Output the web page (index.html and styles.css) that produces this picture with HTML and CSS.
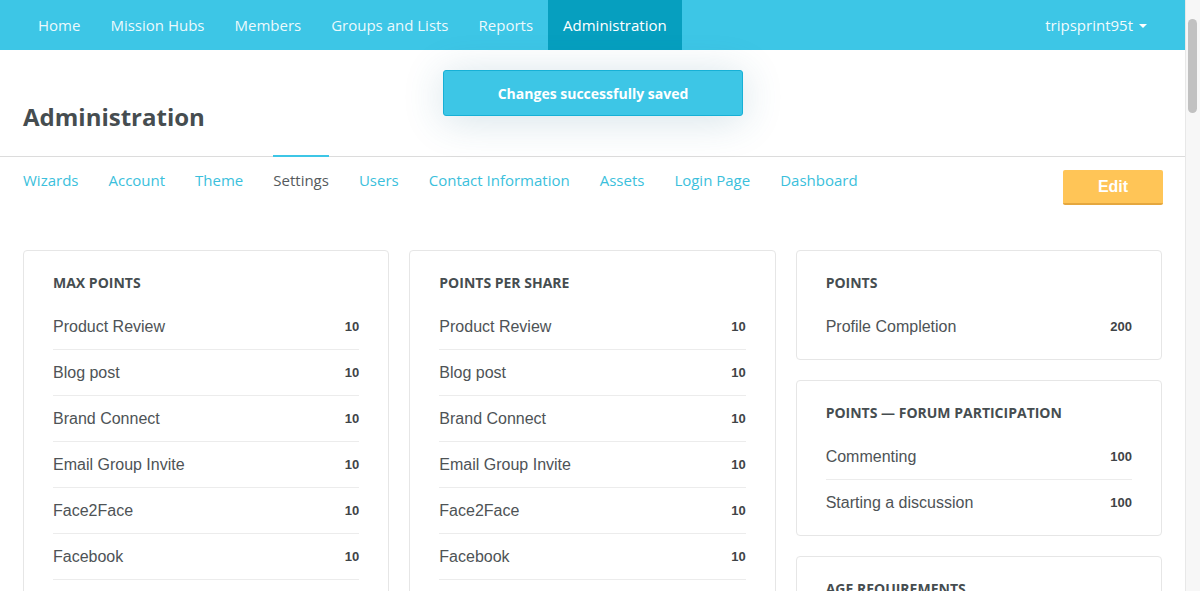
FILE: index.html
```html
<!DOCTYPE html>
<html>
<head>
<meta charset="utf-8">
<link rel="stylesheet" href="styles.css">
</head>
<body>
<div class="page">
<nav class="topbar">
  <ul class="nav-list">
    <li class="nav-item">Home</li>
    <li class="nav-item">Mission Hubs</li>
    <li class="nav-item">Members</li>
    <li class="nav-item">Groups and Lists</li>
    <li class="nav-item">Reports</li>
    <li class="nav-item active">Administration</li>
  </ul>
  <div class="user-menu">tripsprint95t <span class="caret"></span></div>
</nav>

<div class="toast">Changes successfully saved</div>

<header class="page-header">
  <h1 class="page-title">Administration</h1>
</header>

<div class="tabs-bar">
  <ul class="tabs">
    <li class="tab">Wizards</li>
    <li class="tab">Account</li>
    <li class="tab">Theme</li>
    <li class="tab active">Settings</li>
    <li class="tab">Users</li>
    <li class="tab">Contact Information</li>
    <li class="tab">Assets</li>
    <li class="tab">Login Page</li>
    <li class="tab">Dashboard</li>
  </ul>
  <button class="edit-btn">Edit</button>
</div>

<main class="grid">
  <div class="col">
    <section class="card">
      <h2 class="card-title">Max Points</h2>
      <ul class="rows">
        <li class="row"><span class="label">Product Review</span><span class="value">10</span></li>
        <li class="row"><span class="label">Blog post</span><span class="value">10</span></li>
        <li class="row"><span class="label">Brand Connect</span><span class="value">10</span></li>
        <li class="row"><span class="label">Email Group Invite</span><span class="value">10</span></li>
        <li class="row"><span class="label">Face2Face</span><span class="value">10</span></li>
        <li class="row"><span class="label">Facebook</span><span class="value">10</span></li>
        <li class="row"><span class="label">Instagram</span><span class="value">10</span></li>
        <li class="row"><span class="label">LinkedIn</span><span class="value">10</span></li>
        <li class="row"><span class="label">Pinterest</span><span class="value">10</span></li>
        <li class="row"><span class="label">Twitter</span><span class="value">10</span></li>
        <li class="row"><span class="label">YouTube</span><span class="value">10</span></li>
      </ul>
    </section>
  </div>
  <div class="col">
    <section class="card">
      <h2 class="card-title">Points per Share</h2>
      <ul class="rows">
        <li class="row"><span class="label">Product Review</span><span class="value">10</span></li>
        <li class="row"><span class="label">Blog post</span><span class="value">10</span></li>
        <li class="row"><span class="label">Brand Connect</span><span class="value">10</span></li>
        <li class="row"><span class="label">Email Group Invite</span><span class="value">10</span></li>
        <li class="row"><span class="label">Face2Face</span><span class="value">10</span></li>
        <li class="row"><span class="label">Facebook</span><span class="value">10</span></li>
        <li class="row"><span class="label">Instagram</span><span class="value">10</span></li>
        <li class="row"><span class="label">LinkedIn</span><span class="value">10</span></li>
        <li class="row"><span class="label">Pinterest</span><span class="value">10</span></li>
        <li class="row"><span class="label">Twitter</span><span class="value">10</span></li>
        <li class="row"><span class="label">YouTube</span><span class="value">10</span></li>
      </ul>
    </section>
  </div>
  <div class="col">
    <section class="card">
      <h2 class="card-title">Points</h2>
      <ul class="rows">
        <li class="row"><span class="label">Profile Completion</span><span class="value">200</span></li>
      </ul>
    </section>
    <section class="card">
      <h2 class="card-title">Points — Forum Participation</h2>
      <ul class="rows">
        <li class="row"><span class="label">Commenting</span><span class="value">100</span></li>
        <li class="row"><span class="label">Starting a discussion</span><span class="value">100</span></li>
      </ul>
    </section>
    <section class="card">
      <h2 class="card-title">Age Requirements</h2>
      <ul class="rows">
        <li class="row"><span class="label">Minimum age</span><span class="value">13</span></li>
      </ul>
    </section>
  </div>
</main>
</div>
<div class="scrollbar"><div class="scroll-thumb"></div></div>
</body>
</html>
```

FILE: styles.css
```css
* { box-sizing: border-box; }

html, body {
  margin: 0;
  padding: 0;
  background: #fff;
}

body {
  font-family: "Open Sans", "Liberation Sans", sans-serif;
  color: #464d50;
}

.page {
  width: 1185px;
  min-height: 2600px;
  position: relative;
}

ul { list-style: none; margin: 0; padding: 0; }

.topbar {
  height: 50px;
  background: #3dc6e6;
  display: flex;
  align-items: stretch;
  justify-content: space-between;
  padding: 0 23px;
}

.nav-list {
  display: flex;
  align-items: stretch;
}

.nav-item {
  display: flex;
  align-items: center;
  padding: 0 15px;
  font-size: 15px;
  color: rgba(255, 255, 255, 0.92);
}

.nav-item.active {
  background: #069fbf;
  color: #fff;
}

.user-menu {
  display: flex;
  align-items: center;
  gap: 6px;
  padding: 0 15px;
  font-size: 15px;
  color: rgba(255, 255, 255, 0.95);
}

.caret {
  width: 0;
  height: 0;
  border-left: 4px solid transparent;
  border-right: 4px solid transparent;
  border-top: 4px solid #fff;
  margin-top: 1px;
}

.toast {
  position: absolute;
  left: 443px;
  top: 70px;
  width: 300px;
  height: 46px;
  background: #3dc6e6;
  border: 1px solid #17b0d6;
  border-radius: 3px;
  color: #fff;
  font-weight: 700;
  font-size: 14px;
  line-height: 20px;
  padding-top: 1px;
  display: flex;
  align-items: center;
  justify-content: center;
  box-shadow: 0 4px 40px rgba(40, 110, 140, 0.2);
}

.page-header {
  height: 106px;
  padding: 0 23px;
  display: flex;
  align-items: flex-end;
}

.page-title {
  margin: 0 0 24px;
  font-size: 24px;
  font-weight: 700;
  color: #464d50;
  line-height: 30px;
}

.tabs-bar {
  border-top: 1px solid #dcdcdc;
  display: flex;
  align-items: flex-start;
  justify-content: space-between;
  padding: 0 22px 0 23px;
  height: 93px;
}

.tabs {
  display: flex;
  gap: 30px;
  padding-top: 12px;
}

.tab {
  position: relative;
  font-size: 15px;
  line-height: 22px;
  color: #3bbfdc;
}

.tab.active {
  color: #555a5d;
}

.tab.active::before {
  content: "";
  position: absolute;
  left: 0;
  right: 0;
  top: -14px;
  height: 2px;
  background: #3dc6e6;
}

.edit-btn {
  margin-top: 13px;
  width: 100px;
  height: 35px;
  border: none;
  border-bottom: 2px solid #e5a73e;
  border-radius: 2px;
  background: #ffc557;
  color: #fff;
  font-family: "Liberation Sans", Arial, sans-serif;
  font-weight: 700;
  font-size: 16px;
  padding: 0;
}

.grid {
  display: grid;
  grid-template-columns: repeat(3, 1fr);
  gap: 20px;
  padding: 1px 23px 0;
}

.col {
  display: flex;
  flex-direction: column;
  gap: 20px;
}

.card {
  border: 1px solid #e6e6e6;
  border-radius: 4px;
  padding: 22px 29px 10px;
}

.card-title {
  margin: 0 0 11px;
  font-size: 14px;
  font-weight: 700;
  line-height: 20px;
  text-transform: uppercase;
  color: #464d50;
}

.row {
  display: flex;
  align-items: center;
  justify-content: space-between;
  height: 46px;
  border-bottom: 1px solid #ececec;
  font-family: "Liberation Sans", Arial, sans-serif;
}

.row:last-child {
  border-bottom: none;
  height: 45px;
}

.label {
  font-size: 16px;
  color: #4e5356;
}

.value {
  font-size: 13px;
  font-weight: 700;
  color: #3f4447;
}

.scrollbar {
  position: fixed;
  top: 0;
  right: 0;
  width: 15px;
  height: 100%;
  background: #f7f7f7;
  border-left: 1px solid #e8e8e8;
}

.scroll-thumb {
  position: absolute;
  top: 19px;
  left: 2px;
  width: 9px;
  height: 94px;
  border-radius: 5px;
  background: #c1c1c1;
}
```
